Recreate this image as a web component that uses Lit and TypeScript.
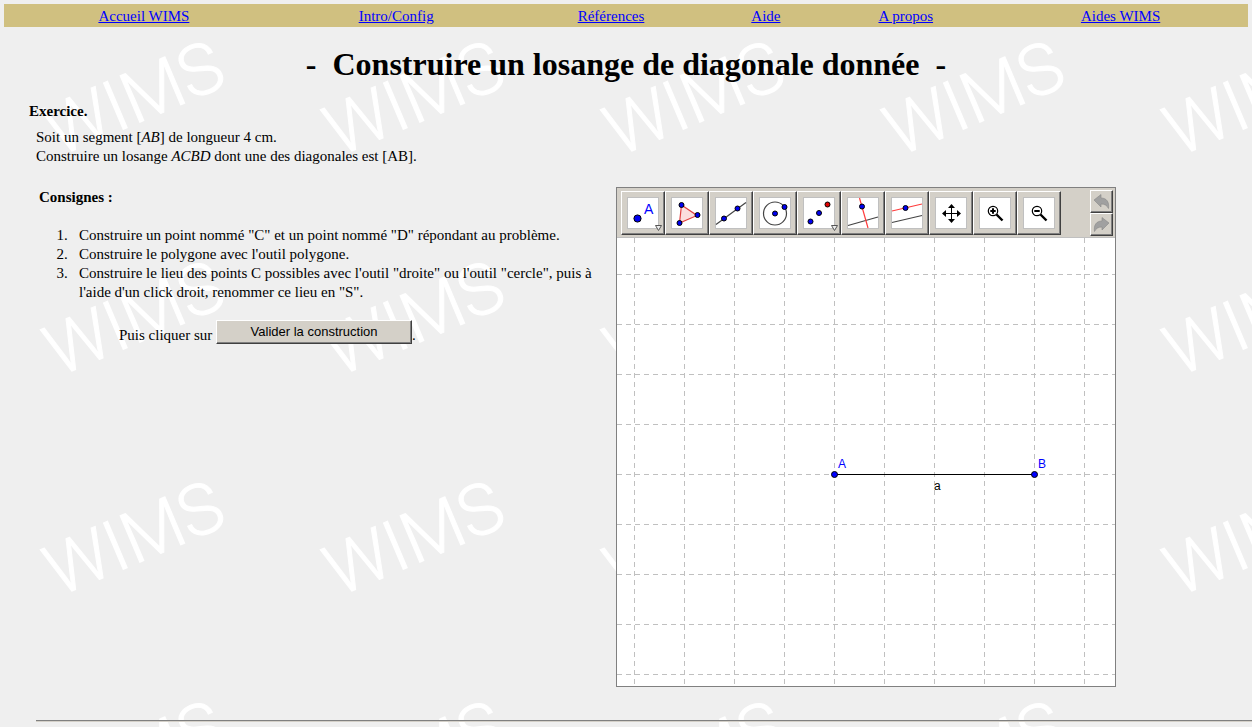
import { LitElement, html, css, svg } from "lit";
import { customElement } from "lit/decorators.js";

const NAV = ["Accueil WIMS", "Intro/Config", "Références", "Aide", "A propos", "Aides WIMS"];

const dot = (x: number, y: number, fill = "#0000f0", r = 2.5) =>
  svg`<circle cx=${x} cy=${y} r=${r} fill=${fill} stroke="#000" stroke-width="1"></circle>`;

const more = svg`<path d="M28.5 28.5h6l-3 5z" fill="#eee" stroke="#555"></path>`;

const lens = (plus: boolean) => svg`
  <g fill="none" stroke="#000">
    <circle cx="14" cy="14" r="4.7" stroke-width="1.2"></circle>
    <path d="M11.3 14h5.4" stroke-width="2"></path>
    ${plus ? svg`<path d="M14 11.3v5.4" stroke-width="2"></path>` : ""}
    <path d="M17.5 17.5l6 6" stroke-width="2.4"></path>
  </g>`;

const TOOLS = [
  {
    label: "Nouveau point",
    art: svg`${dot(10.5, 21.5, "#0000f0", 3.6)}
      <text x="17" y="17" font-family="Liberation Sans, Arial, sans-serif" font-size="14" fill="#00f">A</text>${more}`,
  },
  {
    label: "Polygone",
    art: svg`<path d="M10.5 8 26 18.500 8.500 26z" fill="#fbdede" stroke="#e04040" stroke-width="1.2"></path>
      ${dot(10.5, 8)}${dot(26.5, 18)}${dot(8.5, 26)}`,
  },
  {
    label: "Droite",
    art: svg`<path d="M1 27.500 31 5.500" stroke="#444" stroke-width="1.200" fill="none"></path>${dot(9, 21.5)}${dot(22.5, 11.5)}`,
  },
  {
    label: "Cercle",
    art: svg`<circle cx="16" cy="16.500" r="11.500" stroke="#444" stroke-width="1.200" fill="none"></circle>
      ${dot(16, 16.5)}${dot(25.5, 10)}`,
  },
  {
    label: "Symétrie",
    art: svg`${dot(7.5, 24.5)}${dot(16, 16)}${dot(24.5, 7.5, "#e00000")}${more}`,
  },
  {
    label: "Perpendiculaire",
    art: svg`<path d="M1 28.500 31 20" stroke="#444" stroke-width="1.200"></path><path d="M12.500 1 21 31" stroke="#ff3c3c" stroke-width="1.200"></path>${dot(15, 9.5)}`,
  },
  {
    label: "Parallèle",
    art: svg`<path d="M1 25.500 31 18.500" stroke="#444" stroke-width="1.200"></path><path d="M1 14 31 7" stroke="#ff3c3c" stroke-width="1.200"></path>${dot(14.5, 11)}`,
  },
  {
    label: "Déplacer",
    art: svg`<path d="M16.500 9v15M9 16.500h15" stroke="#000"></path>
      <path d="M16.500 7l3.500 4h-7zM16.500 26l3.500-4h-7zM7 16.500l4-3.500v7zM26 16.500l-4-3.500v7z"></path>`,
  },
  { label: "Agrandir", art: lens(true) },
  { label: "Réduire", art: lens(false) },
];

const undoArrow = svg`<path d="M2 8 9 2.500v3.500c5.500 0 8.500 4 7.500 10.500-1.500-3-3.500-4.500-7.500-4.500v3z" fill="#a0a0a0" stroke="#888" stroke-width=".6"></path>`;

@customElement("geometry-board")
export class GeometryBoard extends LitElement {
  static styles = css`
    :host {
      display: block;
      border: 1px solid #808080;
      background: #fff;
    }
    .toolbar {
      display: flex;
      align-items: center;
      padding: 2px 2px 1px 4px;
      background: #d4d0c8;
      border-bottom: 1px solid #c0c0c0;
    }
    button {
      display: flex;
      align-items: center;
      justify-content: center;
      box-sizing: border-box;
      margin: 0;
      padding: 0;
      background: #d4d0c8;
      border: 1px solid;
      border-color: #fff #404040 #404040 #fff;
      box-shadow: inset -1px -1px #808080;
    }
    .tool {
      width: 44px;
      height: 44px;
    }
    .tool svg {
      overflow: visible;
    }
    .history {
      margin-left: auto;
    }
    .step {
      width: 23px;
      height: 23px;
    }
    .sheet {
      display: block;
      width: 100%;
    }
    .label {
      font: 12px "Liberation Sans", Arial, sans-serif;
    }
    .point {
      fill: #00f;
    }
  `;

  render() {
    const cols = Array.from({ length: 10 }, (_, i) => 17.5 + i * 50);
    const rows = Array.from({ length: 9 }, (_, i) => 36.5 + i * 50);
    return html`
      <div class="toolbar">
        ${TOOLS.map(
          (t) => html`<button class="tool" aria-label=${t.label}>
            <svg width="32" height="32" viewBox="0 0 32 32" aria-hidden="true">
              <rect x=".5" y=".5" width="31" height="31" fill="#fff" stroke="#c0c0c0"></rect>
              ${t.art}
            </svg>
          </button>`
        )}
        <div class="history">
          <button class="step" aria-label="Annuler">
            <svg width="19" height="19" viewBox="0 0 19 19" aria-hidden="true">${undoArrow}</svg>
          </button>
          <button class="step" aria-label="Refaire">
            <svg width="19" height="19" viewBox="0 0 19 19" aria-hidden="true">
              <g transform="matrix(-1 0 0 1 19 0)">${undoArrow}</g>
            </svg>
          </button>
        </div>
      </div>
      <svg class="sheet" viewBox="0 0 498 448" role="img" aria-label="Segment AB">
        <g stroke="#c0c0c0" stroke-dasharray="5 4">
          ${cols.map((x) => svg`<path d="M${x} 0V448"></path>`)}
          ${rows.map((y) => svg`<path d="M0 ${y}H498"></path>`)}
        </g>
        <path d="M217 236.500H418" stroke="#000"></path>
        <circle cx="217.500" cy="236.500" r="3" fill="#00f" stroke="#000"></circle>
        <circle cx="417.500" cy="236.500" r="3" fill="#00f" stroke="#000"></circle>
        <text class="label point" x="221" y="230">A</text>
        <text class="label point" x="421" y="230">B</text>
        <text class="label" x="317" y="252">a</text>
      </svg>
    `;
  }
}

@customElement("app-root")
export class AppRoot extends LitElement {
  static styles = css`
    :host {
      display: block;
      position: relative;
      box-sizing: border-box;
      min-height: 100vh;
      padding: 4px 0 5px;
      overflow: hidden;
      background: #efefef;
      color: #000;
      font: 15px/19px "Liberation Serif", "Times New Roman", serif;
    }
    .watermark {
      position: absolute;
      inset: 0;
      width: 100%;
      height: 100%;
      pointer-events: none;
    }
    .mark {
      font: 300 71px Roboto, "Liberation Sans", sans-serif;
      fill: #fff;
      stroke: #fff;
      stroke-width: 1px;
    }
    nav {
      position: relative;
      display: grid;
      grid-template-columns: 56fr 45fr 41fr 21fr 35fr 51fr;
      margin: 0 4px;
      padding: 3px 0 1px;
      background: #d0c080;
      text-align: center;
    }
    a {
      color: #00f;
    }
    main {
      position: relative;
    }
    h1 {
      margin: 19px 0 20px;
      font-size: 32px;
      line-height: 36px;
      text-align: center;
      white-space: pre;
    }
    h2 {
      margin: 0;
      font-size: 15px;
      line-height: 19px;
    }
    .exercise {
      padding-left: 29px;
    }
    .exercise p {
      margin: 7px 0 0 7px;
    }
    .columns {
      display: grid;
      grid-template-columns: minmax(0, 1fr) 500px;
      gap: 24px;
      margin: 21px 136px 0 39px;
    }
    .steps {
      padding-top: 1px;
    }
    ol {
      margin: 19px 0 18px;
      padding-left: 40px;
    }
    li::marker {
      content: counter(list-item) ".\\00a0\\00a0\\00a0";
    }
    .submit {
      margin: 0 0 0 80px;
    }
    .submit button {
      padding: 0 0 2px;
      width: 196px;
      height: 24px;
      background: #d4d0c8;
      border: 1px solid;
      border-color: #fff #404040 #404040 #fff;
      box-shadow: inset -1px -1px #808080;
      font: 13px "Liberation Sans", Arial, sans-serif;
      vertical-align: 4px;
    }
    hr {
      margin: 33px 0 0 36px;
      border: 0;
      border-top: 1px solid #808080;
      border-bottom: 1px solid #d4d0c8;
    }
  `;

  render() {
    return html`
      <svg class="watermark" aria-hidden="true">
        <defs>
          <pattern id="tile" width="280" height="220" patternUnits="userSpaceOnUse">
            <text class="mark" transform="translate(58 157) rotate(-23)">WIMS</text>
          </pattern>
        </defs>
        <rect width="100%" height="100%" fill="url(#tile)"></rect>
      </svg>
      <nav>${NAV.map((n) => html`<span><a href="#">${n}</a></span>`)}</nav>
      <main>
        <h1>-  Construire un losange de diagonale donnée  -</h1>
        <section class="exercise">
          <h2>Exercice.</h2>
          <p>
            Soit un segment [<i>AB</i>] de longueur 4 cm.<br />
            Construire un losange <i>ACBD</i> dont une des diagonales est [AB].
          </p>
        </section>
        <div class="columns">
          <section class="steps">
            <h2>Consignes :</h2>
            <ol>
              <li>Construire un point nommé "C" et un point nommé "D" répondant au problème.</li>
              <li>Construire le polygone avec l'outil polygone.</li>
              <li>
                Construire le lieu des points C possibles avec l'outil "droite" ou l'outil "cercle", puis à l'aide d'un
                click droit, renommer ce lieu en "S".
              </li>
            </ol>
            <p class="submit">Puis cliquer sur <button type="button">Valider la construction</button>.</p>
          </section>
          <geometry-board></geometry-board>
        </div>
        <hr />
      </main>
    `;
  }
}
